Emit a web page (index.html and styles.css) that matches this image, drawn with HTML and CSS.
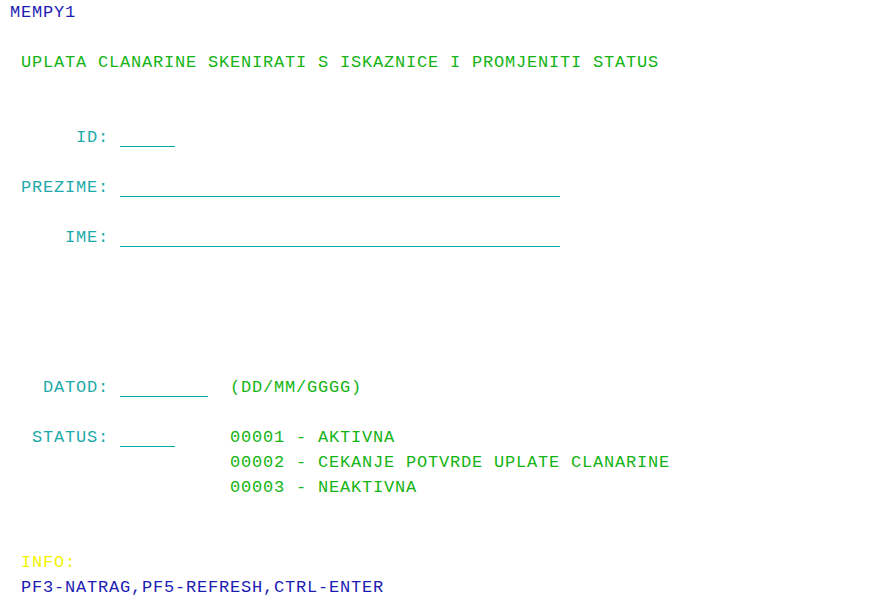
FILE: index.html
```html
<!DOCTYPE html>
<html>
<head>
<meta charset="utf-8">
<link rel="stylesheet" href="styles.css">
</head>
<body>
<div class="screen">
<div class="row blue"> MEMPY1</div>
<div class="row"></div>
<div class="row green">  UPLATA CLANARINE SKENIRATI S ISKAZNICE I PROMJENITI STATUS</div>
<div class="row"></div>
<div class="row"></div>
<div class="row"><span class="turq">       ID: </span><span class="field w5"></span></div>
<div class="row"></div>
<div class="row"><span class="turq">  PREZIME: </span><span class="field w40"></span></div>
<div class="row"></div>
<div class="row"><span class="turq">      IME: </span><span class="field w40"></span></div>
<div class="row"></div>
<div class="row"></div>
<div class="row"></div>
<div class="row"></div>
<div class="row"></div>
<div class="row"><span class="turq">    DATOD: </span><span class="field w8"></span><span class="green">  (DD/MM/GGGG)</span></div>
<div class="row"></div>
<div class="row"><span class="turq">   STATUS: </span><span class="field w5"></span><span class="green">     00001 - AKTIVNA</span></div>
<div class="row green">                     00002 - CEKANJE POTVRDE UPLATE CLANARINE</div>
<div class="row green">                     00003 - NEAKTIVNA</div>
<div class="row"></div>
<div class="row"></div>
<div class="row yellow">  INFO:</div>
<div class="row blue">  PF3-NATRAG,PF5-REFRESH,CTRL-ENTER</div>
</div>
</body>
</html>
```

FILE: styles.css
```css
html, body {
  margin: 0;
  padding: 0;
  background: #ffffff;
}
.screen {
  margin-left: -1px;
  font-family: "Liberation Mono", "Courier New", monospace;
  font-size: 17px;
  letter-spacing: 0.8px;
}
.row {
  white-space: pre;
  height: 25px;
  line-height: 25px;
}
.blue { color: #1c1cb4; }
.green { color: #14b414; }
.turq { color: #1eaaaa; }
.yellow { color: #f4f400; }
.field {
  display: inline-block;
  vertical-align: top;
  height: 21px;
  border-bottom: 1px solid #00aaaa;
}
.w5 { width: 55px; }
.w8 { width: 88px; }
.w40 { width: 440px; }
```
